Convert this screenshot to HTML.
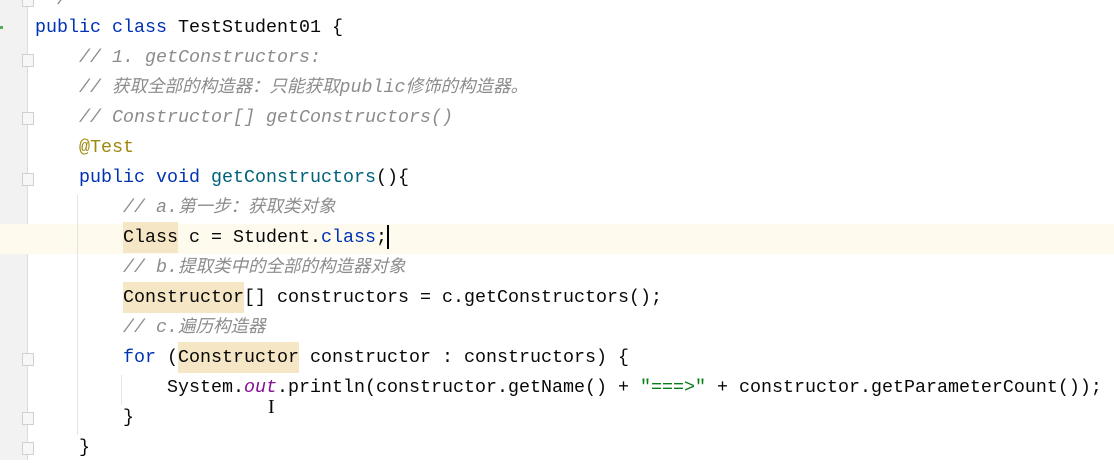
<!DOCTYPE html>
<html><head><meta charset="utf-8"><style>
body{margin:0;width:1114px;height:460px;overflow:hidden;background:#fff;position:relative;font-family:"Liberation Mono","Noto Sans CJK SC",monospace;font-size:18.33px;color:#080808}
.g{position:absolute;left:0;top:0;width:27px;height:460px;background:#f2f2f2;border-right:1px solid #dcdcdc}
.hl{position:absolute;left:0;top:224px;width:1114px;height:30px;background:#fefbee}
.l{position:absolute;height:30px;line-height:30px;white-space:pre}
.k{color:#0033b3}.c{color:#8c8c8c;font-style:italic}.a{color:#9e880d}.m{color:#00627a}.s{color:#067d17}.o{color:#871094;font-style:italic}
.z{font-family:"Noto Sans CJK SC",sans-serif;font-size:17.5px;line-height:0}
.y{background:#f5e7c5;padding:5px 0}
.f{position:absolute;left:22px;width:10px;height:11px;border:1px solid #d0d0d0;background:#f7f7f7}
.v{position:absolute;width:1px;background:#e4e4e4}
</style></head><body>
<div class="g"></div>
<div class="hl"></div>
<div class="f" style="top:-6px"></div>
<div class="f" style="top:54px"></div>
<div class="f" style="top:112px"></div>
<div class="f" style="top:173px"></div>
<div class="f" style="top:353px"></div>
<div class="f" style="top:412px"></div>
<div class="f" style="top:442px"></div>
<div style="position:absolute;left:0;top:26px;width:3px;height:3px;background:#5a5"></div>
<div class="v" style="left:77px;top:195px;height:240px"></div>
<div class="v" style="left:121px;top:375px;height:30px"></div>
<div class="l c" style="top:-15px;left:35px"> */</div>
<div class="l" style="top:13px;left:35px"><span class="k">public class</span> TestStudent01 {</div>
<div class="l c" style="top:43px;left:79px">// 1. getConstructors:</div>
<div class="l c" style="top:73px;left:79px">// <span class="z">获取全部的构造器：只能获取</span>public<span class="z">修饰的构造器。</span></div>
<div class="l c" style="top:103px;left:79px">// Constructor[] getConstructors()</div>
<div class="l a" style="top:133px;left:79px">@Test</div>
<div class="l" style="top:163px;left:79px"><span class="k">public void</span> <span class="m">getConstructors</span>(){</div>
<div class="l c" style="top:193px;left:123px">// a.<span class="z">第一步：获取类对象</span></div>
<div class="l" style="top:223px;left:123px"><span class="y">Class</span> c = Student.<span class="k">class</span>;<span style="display:inline-block;width:2px;height:24px;background:#000;vertical-align:middle"></span></div>
<div class="l c" style="top:253px;left:123px">// b.<span class="z">提取类中的全部的构造器对象</span></div>
<div class="l" style="top:283px;left:123px"><span class="y">Constructor</span>[] constructors = c.getConstructors();</div>
<div class="l c" style="top:313px;left:123px">// c.<span class="z">遍历构造器</span></div>
<div class="l" style="top:343px;left:123px"><span class="k">for</span> (<span class="y">Constructor</span> constructor : constructors) {</div>
<div class="l" style="top:373px;left:167px">System.<span class="o">out</span>.println(constructor.getName() + <span class="s">"===&gt;"</span> + constructor.getParameterCount());</div>
<div class="l" style="top:403px;left:123px">}</div>
<div class="l" style="top:433px;left:79px">}</div>
<div class="l" style="top:392px;left:268px;font-size:20px;font-family:'Liberation Serif',serif">I</div>
</body></html>
